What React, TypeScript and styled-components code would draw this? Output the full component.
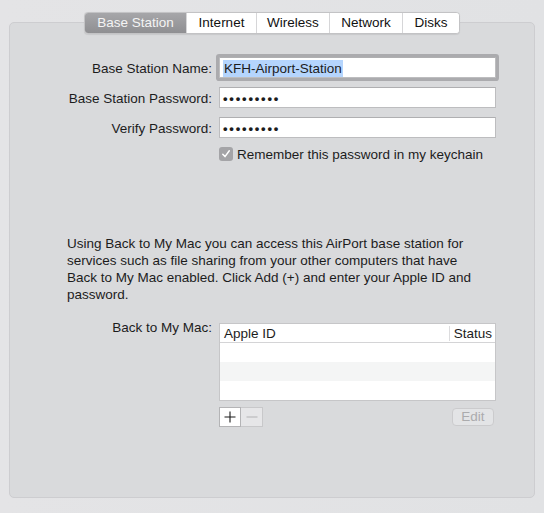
import React from 'react';
import styled, { createGlobalStyle } from 'styled-components';

const Global = createGlobalStyle`
  html, body { margin: 0; padding: 0; background: #e3e3e5; }
  body {
    font-family: "Liberation Sans", Arial, sans-serif;
    font-size: 13.5px;
    color: #1c1c1c;
  }
`;

const Window = styled.div`
  width: 544px;
  height: 513px;
  box-sizing: border-box;
  padding: 22px 9px 15px;
  background: linear-gradient(90deg, #e4e4e6 0%, #e1e2e4 100%);
`;

const Panel = styled.div`
  height: 476px;
  box-sizing: border-box;
  border: 1px solid #cdcdd0;
  border-radius: 5px;
  background: #d9dadc;
  display: flex;
  flex-direction: column;
`;

const Tabs = styled.div`
  align-self: center;
  margin-top: -11px;
  display: flex;
  height: 20px;
  border: 1px solid #c3c3c5;
  border-radius: 4px;
  background: #ffffff;
  overflow: hidden;
  box-shadow: 0 0.5px 1px rgba(0, 0, 0, 0.08);
`;

const Tab = styled.div<{ $w: number; $active?: boolean }>`
  width: ${(p) => p.$w}px;
  box-sizing: border-box;
  display: flex;
  align-items: center;
  justify-content: center;
  line-height: 20px;
  color: ${(p) => (p.$active ? '#f4f4f4' : '#111')};
  background: ${(p) => (p.$active ? 'linear-gradient(#a6a6a9, #8f8f92)' : '#fff')};
  & + & {
    border-left: 1px solid #d6d6d8;
  }
`;

const Form = styled.div`
  margin-top: 23px;
  display: grid;
  grid-template-columns: 202px 277px;
  column-gap: 7px;
  row-gap: 9px;
  align-items: center;
`;

const Label = styled.div`
  text-align: right;
  height: 21px;
  line-height: 19px;
  padding-top: 2px;
  box-sizing: border-box;
  white-space: nowrap;
`;

const Field = styled.div<{ $focused?: boolean }>`
  height: 21px;
  box-sizing: border-box;
  border: 1px solid #bdbdbf;
  border-top-color: #afafb1;
  background: #fff;
  padding: 1px 0 0 3px;
  display: flex;
  align-items: center;
  box-shadow: ${(p) => (p.$focused ? '0 0 0 3px #ababae' : 'none')};
  border-radius: ${(p) => (p.$focused ? '1px' : '0')};
`;

const Selected = styled.span`
  background: #b5d5fd;
  padding: 0 1px;
  line-height: 17px;
`;

const Dots = styled.span`
  font-size: 13px;
  letter-spacing: 1.8px;
  font-weight: bold;
  line-height: 17px;
`;

const CheckRow = styled.div`
  grid-column: 2;
  display: flex;
  align-items: center;
  gap: 4px;
  height: 14px;
`;

const CheckBox = styled.div`
  width: 14px;
  height: 14px;
  box-sizing: border-box;
  border-radius: 3px;
  background: #a4a4a7;
  display: flex;
  align-items: center;
  justify-content: center;
`;

const CheckText = styled.span`
  line-height: 14px;
  padding-top: 1px;
`;

const Paragraph = styled.p`
  margin: 74px 0 0 57px;
  width: 412px;
  line-height: 17px;
`;

const MacGrid = styled.div`
  margin-top: 20px;
  display: grid;
  grid-template-columns: 202px 277px;
  column-gap: 7px;
  row-gap: 6px;
`;

const MacLabel = styled.div`
  text-align: right;
  line-height: 14px;
  margin-top: -2px;
`;

const Table = styled.div`
  border: 1px solid #c6c6c8;
  background: #fff;
`;

const HeaderRow = styled.div`
  height: 18px;
  border-bottom: 1px solid #d4d4d6;
  display: flex;
  align-items: stretch;
`;

const HeaderCell = styled.div<{ $grow?: boolean }>`
  flex: ${(p) => (p.$grow ? 1 : '0 0 auto')};
  padding: 0 6px 0 4px;
  line-height: 19px;
  color: #1c1c1c;
  & + & {
    border-left: 1px solid #dcdcde;
    margin: 2px 0 1px;
    line-height: 15px;
    padding: 0 3px 0 4px;
  }
`;

const Row = styled.div<{ $alt?: boolean }>`
  height: 19px;
  background: ${(p) => (p.$alt ? '#f4f5f5' : '#fff')};
`;

const Controls = styled.div`
  grid-column: 2;
  display: flex;
  align-items: flex-start;
  justify-content: space-between;
`;

const Segs = styled.div`
  display: flex;
`;

const SegButton = styled.div<{ $disabled?: boolean }>`
  width: 22px;
  height: 20px;
  box-sizing: border-box;
  border: 1px solid ${(p) => (p.$disabled ? '#c8c8ca' : '#b4b4b6')};
  background: ${(p) => (p.$disabled ? '#e6e6e8' : '#fff')};
  display: flex;
  align-items: center;
  justify-content: center;
  & + & {
    border-left: none;
  }
`;

const EditButton = styled.div`
  width: 42px;
  height: 18px;
  margin: 1px 2px 0 0;
  box-sizing: border-box;
  border: 1px solid #cbcbcd;
  border-radius: 4px;
  background: #e3e4e6;
  color: #ababad;
  line-height: 16px;
  text-align: center;
`;

const tabs = [
  { label: 'Base Station', w: 101, active: true },
  { label: 'Internet', w: 70 },
  { label: 'Wireless', w: 73 },
  { label: 'Network', w: 73 },
  { label: 'Disks', w: 57 },
];

export default function App() {
  return (
    <>
      <Global />
      <Window>
        <Panel>
          <Tabs>
            {tabs.map((t) => (
              <Tab key={t.label} $w={t.w} $active={t.active}>
                {t.label}
              </Tab>
            ))}
          </Tabs>

          <Form>
            <Label>Base Station Name:</Label>
            <Field $focused>
              <Selected>KFH-Airport-Station</Selected>
            </Field>
            <Label>Base Station Password:</Label>
            <Field>
              <Dots>•••••••••</Dots>
            </Field>
            <Label>Verify Password:</Label>
            <Field>
              <Dots>•••••••••</Dots>
            </Field>
            <CheckRow>
              <CheckBox>
                <svg width="10" height="10" viewBox="0 0 10 10">
                  <path d="M1.8 5.2 L4 7.6 L8.3 1.8" fill="none" stroke="#fff" strokeWidth="1.5" strokeLinecap="round" strokeLinejoin="round" />
                </svg>
              </CheckBox>
              <CheckText>Remember this password in my keychain</CheckText>
            </CheckRow>
          </Form>

          <Paragraph>
            Using Back to My Mac you can access this AirPort base station for services such as file sharing from your other computers that have Back to My Mac enabled. Click Add (+) and enter your Apple ID and password.
          </Paragraph>

          <MacGrid>
            <MacLabel>Back to My Mac:</MacLabel>
            <Table>
              <HeaderRow>
                <HeaderCell $grow>Apple ID</HeaderCell>
                <HeaderCell>Status</HeaderCell>
              </HeaderRow>
              <Row />
              <Row $alt />
              <Row />
            </Table>
            <Controls>
              <Segs>
                <SegButton>
                  <svg width="12" height="12" viewBox="0 0 12 12">
                    <path d="M6 0.5 V11.5 M0.5 6 H11.5" stroke="#1a1a1a" strokeWidth="1.1" />
                  </svg>
                </SegButton>
                <SegButton $disabled>
                  <svg width="12" height="12" viewBox="0 0 12 12">
                    <path d="M0.5 6 H11.5" stroke="#b6b6b8" strokeWidth="1.1" />
                  </svg>
                </SegButton>
              </Segs>
              <EditButton>Edit</EditButton>
            </Controls>
          </MacGrid>
        </Panel>
      </Window>
    </>
  );
}
